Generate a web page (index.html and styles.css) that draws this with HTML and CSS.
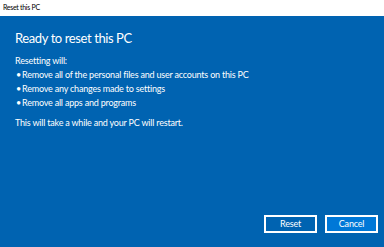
FILE: index.html
```html
<!DOCTYPE html>
<html>
  <head>
    <meta charset="UTF-8" />
    <title>Reset this PC</title>
    <link rel="stylesheet" href="styles.css">
  </head>
  <body>
    <div class="title-bar">Reset this PC</div>

    <div class="dialog">
      <div class="dialog-body">
        <h1 class="dialog-title">Ready to reset this PC</h1>
        <p class="dialog-lead">Resetting will:</p>
        <ul class="reset-list">
          <li>Remove all of the personal files and user accounts on this PC</li>
          <li>Remove any changes made to settings</li>
          <li>Remove all apps and programs</li>
        </ul>
        <p class="dialog-note">This will take a while and your PC will restart.</p>
      </div>

      <div class="dialog-actions">
        <button class="btn">Reset</button>
        <button class="btn btn-primary">Cancel</button>
      </div>
    </div>
  </body>
</html>
```

FILE: styles.css
```css
:root {
  --win-blue: #0063b1;
  --accent-blue: #0078d7;
  --text-white: #ffffff;
}

* {
  margin: 0;
  padding: 0;
  box-sizing: border-box;
}

html, body {
  height: 100%;
}

body {
  font-family: Lato, "Noto Sans", sans-serif;
  background: var(--win-blue);
  color: var(--text-white);
  display: flex;
  flex-direction: column;
  overflow: hidden;
}

.title-bar {
  background: #ffffff;
  color: #000000;
  height: 16px;
  font-size: 7px;
  letter-spacing: -0.3px;
  line-height: 14px;
  padding-left: 3px;
}

.dialog {
  flex: 1;
  display: flex;
  flex-direction: column;
  justify-content: space-between;
}

.dialog-body {
  padding: 11px 15px 0;
}

.dialog-title {
  font-size: 13px;
  font-weight: 400;
  letter-spacing: -0.4px;
  line-height: 22px;
  margin-bottom: 5px;
}

.dialog-lead,
.reset-list li,
.dialog-note {
  font-size: 9px;
  letter-spacing: -0.2px;
  line-height: 14px;
}

.reset-list {
  list-style: none;
}

.reset-list li::before {
  content: "\2022";
  display: inline-block;
  width: 6px;
  padding-left: 1px;
}

.dialog-note {
  margin-top: 6px;
}

.dialog-actions {
  display: flex;
  justify-content: flex-end;
  gap: 8px;
  padding: 0 6px 14px 0;
}

.btn {
  width: 53px;
  height: 18px;
  background: var(--win-blue);
  border: 2px solid var(--text-white);
  color: var(--text-white);
  font-family: inherit;
  font-size: 9px;
  letter-spacing: -0.2px;
  line-height: 12px;
}

.btn-primary {
  background: var(--accent-blue);
}
```
